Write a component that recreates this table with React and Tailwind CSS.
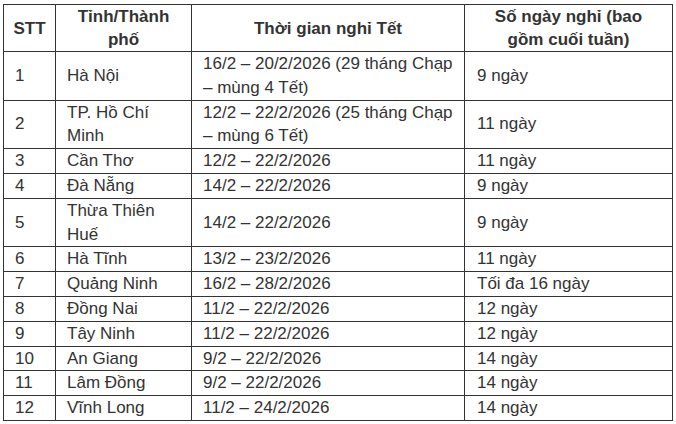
import React from 'react';

const rows = [
    ['1', ['Hà Nội'], ['16/2 – 20/2/2026 (29 tháng Chạp', '– mùng 4 Tết)'], '9 ngày'],
    ['2', ['TP. Hồ Chí', 'Minh'], ['12/2 – 22/2/2026 (25 tháng Chạp', '– mùng 6 Tết)'], '11 ngày'],
    ['3', ['Cần Thơ'], ['12/2 – 22/2/2026'], '11 ngày'],
    ['4', ['Đà Nẵng'], ['14/2 – 22/2/2026'], '9 ngày'],
    ['5', ['Thừa Thiên', 'Huế'], ['14/2 – 22/2/2026'], '9 ngày'],
    ['6', ['Hà Tĩnh'], ['13/2 – 23/2/2026'], '11 ngày'],
    ['7', ['Quảng Ninh'], ['16/2 – 28/2/2026'], 'Tối đa 16 ngày'],
    ['8', ['Đồng Nai'], ['11/2 – 22/2/2026'], '12 ngày'],
    ['9', ['Tây Ninh'], ['11/2 – 22/2/2026'], '12 ngày'],
    ['10', ['An Giang'], ['9/2 – 22/2/2026'], '14 ngày'],
    ['11', ['Lâm Đồng'], ['9/2 – 22/2/2026'], '14 ngày'],
    ['12', ['Vĩnh Long'], ['11/2 – 24/2/2026'], '14 ngày'],
];

const Lines = ({ lines }) => lines.map((l, i) => <div key={i}>{l}</div>);

const App = () => {
    return (
        <div className="w-[676px] h-[424px] bg-white pt-[4px] pl-[3px]" style={{ fontFamily: '"Liberation Sans", Arial, sans-serif' }}>
            <table className="table-fixed border-collapse w-[669px] text-[17px] leading-[23.8px] text-[#333]">
                <colgroup>
                    <col className="w-[52px]" />
                    <col className="w-[136px]" />
                    <col className="w-[273px]" />
                    <col className="w-[208px]" />
                </colgroup>
                <thead>
                    <tr className="font-bold text-center leading-[23px]">
                        <th className="border border-[#333] px-[4px] h-[46px]">STT</th>
                        <th className="border border-[#333] px-[4px]"><Lines lines={['Tỉnh/Thành', 'phố']} /></th>
                        <th className="border border-[#333] px-[4px]">Thời gian nghỉ Tết</th>
                        <th className="border border-[#333] px-[4px]"><Lines lines={['Số ngày nghỉ (bao', 'gồm cuối tuần)']} /></th>
                    </tr>
                </thead>
                <tbody>
                    {rows.map(([stt, city, time, days]) => (
                        <tr key={stt}>
                            <td className="border border-[#333] pl-[11px] align-middle">{stt}</td>
                            <td className="border border-[#333] pl-[11px] align-middle"><Lines lines={city} /></td>
                            <td className="border border-[#333] pl-[11px] align-middle whitespace-nowrap"><Lines lines={time} /></td>
                            <td className="border border-[#333] pl-[12px] align-middle">{days}</td>
                        </tr>
                    ))}
                </tbody>
            </table>
        </div>
    );
};

export default App;
